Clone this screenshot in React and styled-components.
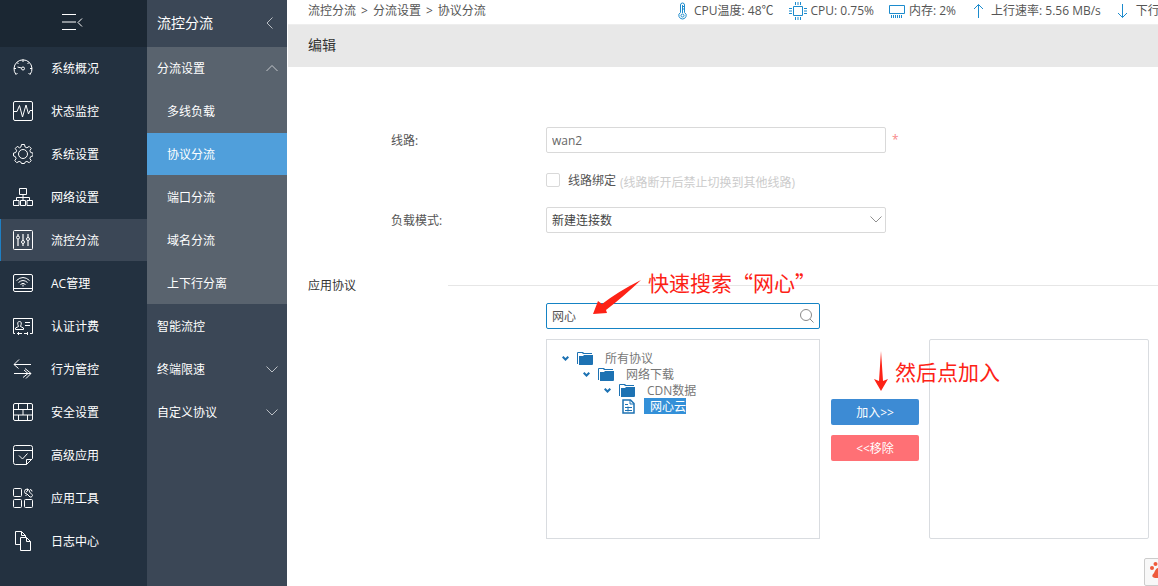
import React, { useState } from "react";
import styled, { createGlobalStyle } from "styled-components";

const GlobalStyle = createGlobalStyle`
  * {
    box-sizing: border-box;
  }
  body {
    margin: 0;
    background: #fff;
    color: #555;
    font-family: "Open Sans", "Noto Sans CJK SC", sans-serif;
    font-size: 12px;
    line-height: 16px;
  }
  button, input, select {
    font: inherit;
  }
  a {
    color: inherit;
    text-decoration: none;
  }
  ul {
    list-style: none;
    margin: 0;
    padding: 0;
  }
`;

const Page = styled.div`
  display: flex;
  min-height: 100vh;
  overflow: hidden;
`;

const Sidebar = styled.nav`
  flex: 0 0 147px;
  background: #233140;
  color: #fff;
`;

const SidebarTop = styled.button`
  display: flex;
  align-items: center;
  justify-content: center;
  width: 100%;
  height: 47px;
  padding: 0 3px 2px 0;
  border: 0;
  background: #1b2733;
  color: #fff;
  cursor: pointer;
`;

const MenuLink = styled.a`
  display: flex;
  align-items: center;
  gap: 18px;
  height: 42px;
  margin-bottom: 1px;
  padding-left: 12px;
  border-left: 1px solid ${(p) => (p.$active ? "#1e7fc4" : "transparent")};
  background: ${(p) => (p.$active ? "#3b4756" : "transparent")};

  span {
    padding-top: 2px;
  }
`;

const SubMenu = styled.nav`
  flex: 0 0 140px;
  background: #3b4756;
  color: #fff;
`;

const SubHeading = styled.div`
  display: flex;
  align-items: center;
  justify-content: space-between;
  height: 47px;
  padding: 0 14px 2px 10px;
  font-size: 14px;
`;

const Group = styled.div`
  height: 257px;
  margin-bottom: 1px;
  background: #59636e;
`;

const SubLink = styled.a`
  display: flex;
  align-items: center;
  justify-content: space-between;
  height: 42px;
  margin-bottom: 1px;
  padding: 0 9px 0 ${(p) => (p.$child ? "20px" : "10px")};
  background: ${(p) => (p.$active ? "#509fdb" : "transparent")};

  span {
    padding-top: 2px;
  }
`;

const Main = styled.main`
  flex: 1;
  min-width: 0;
  padding-left: 1px;
`;

const TopBar = styled.header`
  display: flex;
  align-items: center;
  height: 25px;
  padding: 0 0 3px 20px;
  border-bottom: 1px solid #eee;
  overflow: hidden;
  white-space: nowrap;
`;

const Crumbs = styled.div`
  display: flex;
  flex: 0 0 368px;
  gap: 5px;
`;

const Stats = styled.div`
  display: flex;
  gap: 15px;
`;

const Stat = styled.span`
  display: flex;
  align-items: center;
  gap: 4px;
  flex: none;

  svg {
    color: #1c8bcd;
  }
`;

const Title = styled.h1`
  margin: 0;
  padding: 0 20px 2px;
  background: #e8e8e8;
  color: #333;
  font-size: 14px;
  font-weight: 400;
  line-height: 40px;
`;

const Form = styled.form`
  padding: 60px 0 47px 20px;
`;

const Row = styled.div`
  display: flex;
  align-items: center;
  height: 26px;
  margin-bottom: 14px;
`;

const Label = styled.label`
  flex: 0 0 238px;
  padding: 2px 0 0 83px;
`;

const CheckLabel = styled.label`
  padding-top: 2px;
`;

const LabelSpace = styled.div`
  flex: 0 0 238px;
`;

const TextInput = styled.input`
  width: 340px;
  height: 26px;
  padding: 0 5px;
  border: 1px solid #d9d9d9;
  border-radius: 2px;
  background: #fff;
  color: #666;
`;

const Required = styled.span`
  margin-left: 6px;
  color: #f78989;
`;

const Checkbox = styled.input`
  appearance: none;
  width: 14px;
  height: 14px;
  margin: 0 8px 0 0;
  border: 1px solid #d9d9d9;
  border-radius: 2px;

  &:checked {
    background: #1c8bcd;
  }
`;

const Hint = styled.span`
  margin-left: 4px;
  padding-top: 5px;
  color: #ccc;
`;

const SelectWrap = styled.div`
  position: relative;

  svg {
    position: absolute;
    right: 4px;
    top: 9px;
    color: #555;
    pointer-events: none;
  }
`;

const Select = styled.select`
  appearance: none;
  display: block;
  width: 340px;
  height: 26px;
  padding: 2px 20px 0 5px;
  border: 1px solid #d9d9d9;
  border-radius: 2px;
  background: #fff;
  color: #444;
`;

const SectionHead = styled.div`
  display: flex;
  align-items: center;
  height: 20px;
  margin: 42px 0 8px;
`;

const SectionTitle = styled.h2`
  flex: 0 0 140px;
  margin: 0;
  padding-top: 2px;
  color: #333;
  font-size: 12px;
  font-weight: 400;
`;

const Divider = styled.hr`
  flex: 1;
  margin: 0;
  border: 0;
  border-top: 1px solid #e6e6e6;
`;

const Picker = styled.div`
  display: flex;
  align-items: flex-end;
`;

const Source = styled.div`
  flex: 0 0 274px;
`;

const SearchBox = styled.div`
  position: relative;
  display: flex;
  align-items: center;
  height: 26px;
  margin-bottom: 10px;
  padding: 0 5px;
  border: 1px solid #1583c4;
  border-radius: 2px;
  color: #888;
`;

const SearchInput = styled.input`
  flex: 1;
  min-width: 0;
  padding: 2px 0 0;
  border: 0;
  outline: 0;
  background: transparent;
  color: #555;
`;

const ListBox = styled.div`
  width: ${(p) => p.$width};
  height: 200px;
  padding: 10px 15px;
  border: 1px solid #d9dce0;
  border-radius: ${(p) => (p.$rounded ? "2px" : "0")};
  color: #777;
`;

const Branch = styled.ul`
  padding-left: ${(p) => (p.$leaf ? "18px" : "21px")};
`;

const Node = styled.div`
  display: flex;
  align-items: center;
  height: 16px;
  color: #1d72b3;

  span {
    margin-left: 12px;
    padding-top: 2px;
    color: #777;
  }
`;

const Caret = styled.svg`
  margin-right: 8px;
`;

const Leaf = styled.button`
  height: 16px;
  margin-left: 9px;
  padding: 1px 0 0 6px;
  border: 0;
  background: #3390d8;
  color: #fff;
  line-height: 15px;
`;

const Actions = styled.div`
  position: relative;
  display: flex;
  flex-direction: column;
  gap: 10px;
  height: 140px;
  margin: 0 10px 0 11px;
`;

const ActionButton = styled.button`
  width: 88px;
  height: 26px;
  padding: 2px 0 0;
  border: 0;
  border-radius: 2px;
  background: ${(p) => (p.$danger ? "#ff7075" : "#3d8bd4")};
  color: #fff;
  cursor: pointer;
`;

const Note = styled.div`
  position: absolute;
  left: ${(p) => p.$left};
  top: ${(p) => p.$top};
  color: #fd2216;
  font-family: "Noto Sans CJK SC", sans-serif;
  font-size: 21px;
  line-height: 28px;
  white-space: nowrap;
`;

const Arrow = styled.svg`
  position: absolute;
  left: ${(p) => p.$left};
  top: ${(p) => p.$top};
  fill: #fd2216;
`;

const ImeButton = styled.button`
  position: fixed;
  right: -14px;
  bottom: 0;
  width: 28px;
  height: 28px;
  padding: 0;
  border: 1px solid #ccc;
  border-radius: 2px;
  background: #f8f8f8;
`;

const Icon = ({ size = 20, width = size, children }) => (
  <svg width={width} height={size} viewBox={`0 0 ${width} ${size}`} fill="none" stroke="currentColor">
    {children}
  </svg>
);

const Chevron = ({ d, w = 12, h = 7 }) => (
  <svg width={w} height={h} viewBox={`0 0 ${w} ${h}`} fill="none" stroke="currentColor" opacity="0.65">
    <path d={d} />
  </svg>
);

const DOWN = "M.5 .5L6 6L11.5 .5";
const UP = "M.5 6L6 .5L11.5 6";

const icons = {
  gauge: (
    <Icon>
      <path d="M3 16.500l1.500-1.500M17 16.500l-1.500-1.500M3 16.500A9 9 0 1 1 17 16.500" />
      <path d="M10 1.500v2.500M4 4.500l1.500 1.500M16 4.500l-1.500 1.500M1 10.500h2M19 10.500h-2M4.500 9l4 1" />
      <circle cx="10" cy="10.500" r="1.500" />
    </Icon>
  ),
  pulse: (
    <Icon>
      <rect x=".5" y=".5" width="19" height="19" rx="1.500" />
      <path d="M1 10.500h3l2.500-6l3 11.500l3.500-12l2.500 9l1.500-3.500H19" />
    </Icon>
  ),
  gear: (
    <Icon>
      <circle cx="10" cy="10" r="4.500" />
      <path d="M8.500.5h3l.6 2.500l1.800.8l2.300-1.400l2 2l-1.300 2.300l.8 1.800l2.300.6v2.800l-2.300.7l-.8 1.800l1.300 2.300l-2 2l-2.300-1.300l-1.800.7l-.6 1.400h-3l-.6-1.400l-1.800-.7l-2.300 1.300l-2-2l1.300-2.300l-.8-1.800L.5 11.900V9.100l2.300-.6l.8-1.800l-1.300-2.300l2-2l2.300 1.400l1.300-.8z" />
    </Icon>
  ),
  network: (
    <Icon>
      <path d="M6.500 1.500h7v6h-7zM10 7.500v6M3.500 13.500v-3h13v3M.5 13.500h5.500v5H.5zM7.500 13.500h5v5h-5zM14 13.500h5.500v5H14z" />
    </Icon>
  ),
  sliders: (
    <Icon>
      <rect x=".5" y=".5" width="19" height="19" rx="1" />
      <path strokeWidth="2" opacity=".6" d="M5 4v12M10 4v12M15 4v12" />
      <circle cx="5" cy="7.500" r="1.500" fill="#3b4756" />
      <circle cx="10" cy="12" r="1.500" fill="#3b4756" />
      <circle cx="15" cy="9" r="1.500" fill="#3b4756" />
    </Icon>
  ),
  wifi: (
    <Icon>
      <rect x=".5" y="1.500" width="19" height="17" rx="1.500" />
      <path d="M.5 15.500h19M3.500 7.500q6.500-6 13 0M5.500 9.500q4.500-4 9 0M7.500 11.500q2.500-2.500 5 0" />
      <path d="M9.500 12.500h1" strokeWidth="2" />
    </Icon>
  ),
  auth: (
    <Icon>
      <path d="M2 17.500H.5v-15h19v15H17M4 17.500h5M11 17.500h4M5.500 16v3M14.500 16v3M12 6.500h5M12 9.500h5" />
      <path d="M5.500 10.500l-3 1.500v1.500h8V12l-3-1.500M7.500 10.500q2-5-1-5t-1 5" />
    </Icon>
  ),
  arrows: (
    <Icon>
      <path d="M18 5.500H1M6 .5l-5 5l4.500 4M1 14.500h17M12 9.500l6 5l-5 5M11 11l4 3.500l-5 4" />
    </Icon>
  ),
  wall: (
    <Icon>
      <rect x=".5" y="1.500" width="19" height="17" rx="1.500" />
      <path d="M.5 7.500h19M.5 13h19M5.500 1.500v6M14.500 1.500v6M10 7.500V13M5.500 13v5.500M14.500 13v5.500" />
    </Icon>
  ),
  check: (
    <Icon>
      <path d="M13.500 19.500h-11q-2 0-2-2v-15q0-2 2-2h15q2 0 2 2v11l-6 6v-5h5M.5 5.500h19M6 10.500l3.500 3.500l5-5.500" />
    </Icon>
  ),
  tools: (
    <Icon>
      <rect x=".5" y=".5" width="8" height="8" rx="1" />
      <rect x=".5" y="11.500" width="8" height="8" rx="1" />
      <rect x="11.500" y="11.500" width="8" height="8" rx="1" />
      <path d="M14.500 1q-3 0-3 2.500t2.500 2.500l3 3q1 .5 2-.5t0-2l-2.500-2.500q.5-2-2-3v2l-1.500 1M17 1.500q2 0 2 2M12.500 8l1.500-1.500" />
    </Icon>
  ),
  docs: (
    <Icon>
      <path d="M7 13.500H2.500V.5h6l4 4V6M8.500.5v4h4M7.500 6.500h6l4 4v9h-10zM13.500 6.500v4h4" />
    </Icon>
  ),
};

const menu = [
  ["gauge", "系统概况"],
  ["pulse", "状态监控"],
  ["gear", "系统设置"],
  ["network", "网络设置"],
  ["sliders", "流控分流"],
  ["wifi", "AC管理"],
  ["auth", "认证计费"],
  ["arrows", "行为管控"],
  ["wall", "安全设置"],
  ["check", "高级应用"],
  ["tools", "应用工具"],
  ["docs", "日志中心"],
];

const children = ["多线负载", "协议分流", "端口分流", "域名分流", "上下行分离"];

const FolderNode = ({ name }) => (
  <Node>
    <Caret width="7" height="5" viewBox="0 0 7 5" fill="none" stroke="currentColor" strokeWidth="2">
      <path d="M.7 .7L3.500 3.500L6.300 .7" />
    </Caret>
    <svg width="16" height="13" viewBox="0 0 16 13">
      <path fill="currentColor" d="M0 12V1q0-1 1-1h5l1 1h8v1H6L5 1H1v11zM2 4h4l1-1h9v9q0 1-1 1H2z" />
    </svg>
    <span>{name}</span>
  </Node>
);

const StatusBar = () => (
  <Stats>
    <Stat>
      <Icon size={18} width={14}>
        <path d="M4.500 10.500V3q0-2 2-2t2 2v7.500q2.500 1.500 1.500 4q-1 2.500-3.500 2.500T3 14.500q-1-2.500 1.500-4zM6.500 3v8M8 4.500H6.500M8 7H6.500" />
        <circle cx="6.500" cy="13.500" r="1.500" />
      </Icon>
      CPU温度: 48℃
    </Stat>
    <Stat>
      <Icon size={18}>
        <path d="M4.500 4.500h9v9h-9zM6.500 0v3M9 0v3M11.500 0v3M6.500 15v3M9 15v3M11.500 15v3M0 6.500h3M0 9h3M0 11.500h3M15 6.500h3M15 9h3M15 11.500h3" />
      </Icon>
      CPU: 0.75%
    </Stat>
    <Stat>
      <Icon size={16}>
        <path d="M.5 2.500h15v8h-15zM2.500 12v3M4.500 12v3M6.500 12v3M8.500 12v3M10.500 12v3M12.500 12v3" />
      </Icon>
      内存: 2%
    </Stat>
    <Stat>
      <Icon size={16}>
        <path d="M7.500 1.500V15M3 6l4.500-4.500L12 6" />
      </Icon>
      上行速率: 5.56 MB/s
    </Stat>
    <Stat>
      <Icon size={16}>
        <path d="M6.500 1v13.500M2 10l4.500 4.500L11 10" />
      </Icon>
      下行
    </Stat>
  </Stats>
);

const App = () => {
  const [line, setLine] = useState("wan2");
  const [keyword, setKeyword] = useState("网心");

  return (
    <Page>
      <GlobalStyle />
      <Sidebar>
        <SidebarTop aria-label="收起菜单">
          <svg width="21" height="17" viewBox="0 0 21 17" fill="none" stroke="currentColor">
            <path d="M0 .5h14M0 15.500h14M20 4.500l-4 4l4 4" />
            <path d="M0 8h14" strokeWidth="2" opacity=".5" />
          </svg>
        </SidebarTop>
        {menu.map(([icon, name]) => (
          <MenuLink href="#" key={icon} $active={icon === "sliders"}>
            {icons[icon]}
            <span>{name}</span>
          </MenuLink>
        ))}
      </Sidebar>

      <SubMenu>
        <SubHeading>
          流控分流
          <Chevron w={7} h={12} d="M6.500 .5L1 6L6.500 11.500" />
        </SubHeading>
        <Group>
          <SubLink href="#">
            <span>分流设置</span>
            <Chevron d={UP} />
          </SubLink>
          {children.map((name) => (
            <SubLink href="#" key={name} $child $active={name === "协议分流"}>
              <span>{name}</span>
            </SubLink>
          ))}
        </Group>
        <SubLink href="#">
          <span>智能流控</span>
        </SubLink>
        <SubLink href="#">
          <span>终端限速</span>
          <Chevron d={DOWN} />
        </SubLink>
        <SubLink href="#">
          <span>自定义协议</span>
          <Chevron d={DOWN} />
        </SubLink>
      </SubMenu>

      <Main>
        <TopBar>
          <Crumbs>
            <span>流控分流</span>
            <span>&gt;</span>
            <span>分流设置</span>
            <span>&gt;</span>
            <span>协议分流</span>
          </Crumbs>
          <StatusBar />
        </TopBar>
        <Title>编辑</Title>

        <Form onSubmit={(e) => e.preventDefault()}>
          <Row>
            <Label htmlFor="line">线路:</Label>
            <TextInput id="line" value={line} onChange={(e) => setLine(e.target.value)} />
            <Required>*</Required>
          </Row>
          <Row>
            <LabelSpace />
            <Checkbox type="checkbox" id="bind" />
            <CheckLabel htmlFor="bind">线路绑定</CheckLabel>
            <Hint>(线路断开后禁止切换到其他线路)</Hint>
          </Row>
          <Row>
            <Label htmlFor="mode">负载模式:</Label>
            <SelectWrap>
              <Select id="mode">
                <option>新建连接数</option>
              </Select>
              <Chevron d={DOWN} />
            </SelectWrap>
          </Row>

          <SectionHead>
            <SectionTitle>应用协议</SectionTitle>
            <Divider />
          </SectionHead>

          <Picker>
            <LabelSpace />
            <Source>
              <SearchBox>
                <SearchInput
                  aria-label="搜索协议"
                  value={keyword}
                  onChange={(e) => setKeyword(e.target.value)}
                />
                <Icon size={14}>
                  <circle cx="6" cy="6" r="5.500" />
                  <path d="M10 10l3.500 3.500" />
                </Icon>
                <Arrow $left="46px" $top="-25px" width="50" height="38" viewBox="0 0 50 38">
                  <path d="M48 1Q26 12 9 25L5 22L0 35L14 34L13 31Q30 18 48 1z" />
                </Arrow>
                <Note $left="101px" $top="-36px">快速搜索“网心”</Note>
              </SearchBox>
              <ListBox $width="274px">
                <ul>
                  <li>
                    <FolderNode name="所有协议" />
                    <Branch>
                      <li>
                        <FolderNode name="网络下载" />
                        <Branch>
                          <li>
                            <FolderNode name="CDN数据" />
                            <Branch $leaf>
                              <li>
                                <Node>
                                  <svg width="13" height="15" viewBox="0 0 13 15" fill="none" stroke="currentColor">
                                    <path strokeWidth="1.500" d="M1 1h7.500l3.500 3.500V14H1z" />
                                    <path d="M8 1v4h4M3 5.500h3M3 8.500h7M3 11.500h7M6 7.500v5" />
                                  </svg>
                                  <Leaf type="button">网心云</Leaf>
                                </Node>
                              </li>
                            </Branch>
                          </li>
                        </Branch>
                      </li>
                    </Branch>
                  </li>
                </ul>
              </ListBox>
            </Source>
            <Actions>
              <ActionButton type="button">加入&gt;&gt;</ActionButton>
              <ActionButton type="button" $danger>
                &lt;&lt;移除
              </ActionButton>
              <Arrow $left="43px" $top="-48px" width="14" height="40" viewBox="0 0 14 40">
                <path d="M7 0L9 30l5-2L7 40L0 28l5 2z" />
              </Arrow>
              <Note $left="64px" $top="-42px">然后点加入</Note>
            </Actions>
            <ListBox $width="220px" $rounded />
          </Picker>
        </Form>
      </Main>

      <ImeButton aria-label="输入法">
        <svg width="18" height="18" viewBox="0 0 18 18" fill="#ee5a3c">
          <circle cx="3" cy="7" r="2" />
          <circle cx="6.500" cy="3" r="2" />
          <circle cx="11.500" cy="3" r="2" />
          <circle cx="15" cy="7" r="2" />
          <path d="M9 7q2 0 4 4q3 6-2 6H6q-5-1-1-5q2-5 4-5z" />
        </svg>
      </ImeButton>
    </Page>
  );
};

export default App;
